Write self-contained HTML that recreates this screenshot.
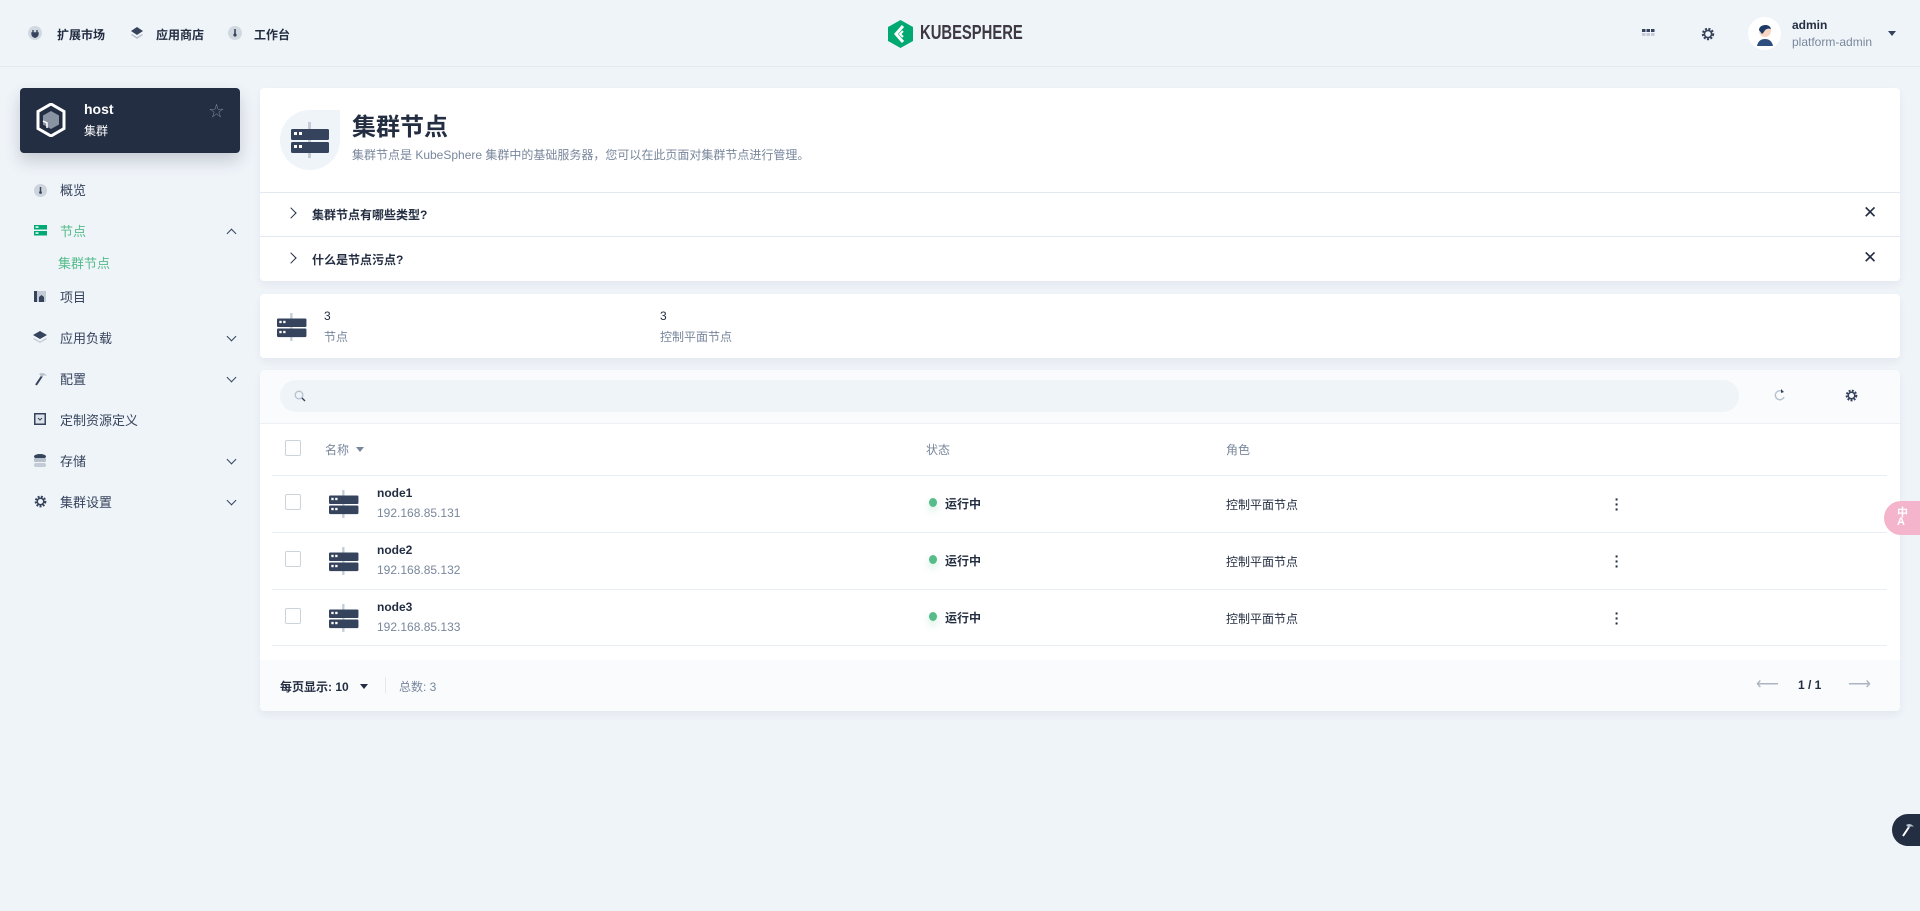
<!DOCTYPE html>
<html><head><meta charset="utf-8"><style>
*{box-sizing:border-box;margin:0;padding:0}
body{width:1920px;height:911px;background:#eff4f9;font-family:"Liberation Sans","Noto Sans CJK SC",sans-serif;color:#242e42;position:relative;overflow:hidden;font-size:12px}
.a{position:absolute}
.b{font-weight:bold}
.m{color:#79879c}
.card{position:absolute;background:#fff;border-radius:4px;box-shadow:0 4px 8px rgba(36,46,66,.06)}
.nav{position:absolute;left:60px;font-size:13px;color:#36435c}
.chev{position:absolute;left:228px;width:7px;height:7px;border-right:1.6px solid #36435c;border-bottom:1.6px solid #36435c;transform:rotate(45deg)}
.hl{position:absolute;left:272px;width:1615px;height:1px;background:#e9eef4}
.cb{position:absolute;left:285px;width:16px;height:16px;border:1px solid #ccd3db;border-radius:2px;background:#fff}
</style></head><body>
<!-- top bar -->
<div class="a" style="left:0;top:66px;width:1920px;height:1px;background:#e3e9ef"></div>
<svg class="a" style="left:28px;top:26px" width="14" height="14"><circle cx="7" cy="7" r="7" fill="#d1d8e0"/><path d="M5 4v3M9 4v3M4 7h6v1a3 3 0 0 1-6 0z M7 10v2" stroke="#36435c" stroke-width="1.4" fill="#36435c"/></svg>
<div class="a b" style="left:57px;top:26px;font-size:12px">扩展市场</div>
<svg class="a" style="left:130px;top:26px" width="14" height="14"><path d="M7 1 13 5 7 9 1 5z" fill="#36435c"/><path d="M2 8 7 11 12 8 13 9 7 13 1 9z" fill="#b7c1cc"/></svg>
<div class="a b" style="left:156px;top:26px;font-size:12px">应用商店</div>
<svg class="a" style="left:228px;top:26px" width="14" height="14"><circle cx="7" cy="7" r="7" fill="#d1d8e0"/><path d="M7 3v6" stroke="#36435c" stroke-width="1.6"/><circle cx="7" cy="9" r="1.6" fill="#36435c"/></svg>
<div class="a b" style="left:254px;top:26px;font-size:12px">工作台</div>
<svg class="a" style="left:888px;top:20px" width="25" height="28" viewBox="0 0 25 28"><path d="M12.5 0 25 7v14L12.5 28 0 21V7z" fill="#00a971"/><path d="M15 6 8 14l7 8" stroke="#fff" stroke-width="3" fill="none"/><path d="M15 11l-3 3 3 3" stroke="#fff" stroke-width="2" fill="none"/></svg>
<div class="a" style="left:920px;top:22px;font-size:20px;color:#3d3842;font-weight:bold;transform:scaleX(0.74);transform-origin:left">KUBESPHERE</div>
<svg class="a" style="left:1642px;top:29px" width="13" height="10"><g fill="#36435c"><rect x="0" y="0" width="3.5" height="3"/><rect x="4.5" y="0" width="3.5" height="3"/><rect x="9" y="0" width="3.5" height="3"/></g><g fill="#c3ccd6"><rect x="0" y="4" width="3.5" height="3"/><rect x="4.5" y="4" width="3.5" height="3"/><rect x="9" y="4" width="3.5" height="3"/></g></svg>
<svg class="a" style="left:1701px;top:27px" width="14" height="14" viewBox="0 0 14 14"><circle cx="7" cy="7" r="5" fill="none" stroke="#36435c" stroke-width="2.4" stroke-dasharray="2 1.4"/><circle cx="7" cy="7" r="3.6" fill="none" stroke="#36435c" stroke-width="1.6"/></svg>
<div class="a" style="left:1748px;top:17px;width:33px;height:33px;border-radius:50%;background:#fff"></div>
<svg class="a" style="left:1754px;top:21px" width="22" height="25"><circle cx="11" cy="10" r="6" fill="#f6d6c3"/><path d="M5 9c0-6 11-7 12-1-3-1-6 0-7 3l-2 2z" fill="#1e3a66"/><path d="M3 25c1-5 4-7 8-7s7 2 8 7z" fill="#2d4e7e"/></svg>
<div class="a b" style="left:1792px;top:18px;font-size:12px">admin</div>
<div class="a m" style="left:1792px;top:35px;font-size:12px">platform-admin</div>
<div class="a" style="left:1888px;top:31px;border:4.5px solid transparent;border-top:5px solid #36435c"></div>

<!-- sidebar card -->
<div class="a" style="left:20px;top:88px;width:220px;height:65px;background:#242e42;border-radius:4px;box-shadow:0 8px 16px rgba(36,46,66,.2)"></div>
<svg class="a" style="left:36px;top:103px" width="30" height="34" viewBox="0 0 30 34"><path d="M15 1 28 8.5v17L15 33 2 25.5v-17z" fill="none" stroke="#fff" stroke-width="3"/><path d="M15 8 23 12.5v9L15 26 7 21.5v-9z" fill="#8a93a2"/><path d="M7 18 11 20v5" stroke="#fff" stroke-width="1.5" fill="none"/></svg>
<div class="a b" style="left:84px;top:101px;font-size:14px;color:#fff">host</div>
<div class="a" style="left:84px;top:122px;font-size:12px;color:#fff">集群</div>
<div class="a" style="left:209px;top:100px;font-size:15px;color:#79879c">☆</div>

<!-- nav -->
<svg class="a" style="left:34px;top:184px" width="13" height="13"><circle cx="6.5" cy="6.5" r="6.5" fill="#cdd4dc"/><path d="M6.5 3v5" stroke="#36435c" stroke-width="1.5"/><circle cx="6.5" cy="8.5" r="1.4" fill="#36435c"/></svg>
<div class="nav" style="top:180px">概览</div>
<svg class="a" style="left:34px;top:225px" width="13" height="11"><rect width="13" height="4.5" fill="#00aa72"/><rect y="6" width="13" height="4.5" fill="#00aa72"/><rect x="1.5" y="1.3" width="3" height="1.5" fill="#fff"/><rect x="1.5" y="7.3" width="3" height="1.5" fill="#fff"/></svg>
<div class="nav" style="top:221px;color:#55bc8a">节点</div>
<div class="chev" style="top:230px;transform:rotate(225deg)"></div>
<div class="nav" style="left:58px;top:253px;color:#55bc8a">集群节点</div>
<svg class="a" style="left:34px;top:291px" width="12" height="11"><rect width="12" height="11" fill="#c3ccd6"/><rect width="3" height="11" fill="#36435c"/><path d="M5 11V6l2.5-2L10 6v5z" fill="#36435c"/></svg>
<div class="nav" style="top:287px">项目</div>
<svg class="a" style="left:33px;top:331px" width="14" height="13"><path d="M7 0 14 4 7 8 0 4z" fill="#36435c"/><path d="M1 7 7 10.5 13 7 14 8 7 12 0 8z" fill="#c3ccd6"/></svg>
<div class="nav" style="top:328px">应用负载</div>
<div class="chev" style="top:333px"></div>
<svg class="a" style="left:34px;top:372px" width="13" height="14"><path d="M2 13 8 4" stroke="#36435c" stroke-width="2"/><path d="M5 2c3-2 6-1 8 2-2-1-4-1-5 1z" fill="#b7c1cc"/></svg>
<div class="nav" style="top:369px">配置</div>
<div class="chev" style="top:374px"></div>
<svg class="a" style="left:34px;top:413px" width="12" height="12"><rect x=".75" y=".75" width="10.5" height="10.5" fill="#dde3ea" stroke="#36435c" stroke-width="1.5"/><path d="M4 5l2 2 2-2" stroke="#36435c" fill="none"/></svg>
<div class="nav" style="top:410px">定制资源定义</div>
<svg class="a" style="left:34px;top:454px" width="12" height="13"><ellipse cx="6" cy="2.5" rx="6" ry="2.5" fill="#36435c"/><rect y="4" width="12" height="4" rx="1" fill="#b7c1cc"/><rect y="9" width="12" height="4" rx="2" fill="#c3ccd6"/></svg>
<div class="nav" style="top:451px">存储</div>
<div class="chev" style="top:456px"></div>
<svg class="a" style="left:34px;top:495px" width="13" height="13" viewBox="0 0 14 14"><circle cx="7" cy="7" r="5" fill="none" stroke="#36435c" stroke-width="2.6" stroke-dasharray="2 1.4"/><circle cx="7" cy="7" r="3.5" fill="none" stroke="#36435c" stroke-width="1.6"/></svg>
<div class="nav" style="top:492px">集群设置</div>
<div class="chev" style="top:497px"></div>

<!-- header card -->
<div class="card" style="left:260px;top:88px;width:1640px;height:193px"></div>
<div class="a" style="left:280px;top:110px;width:60px;height:60px;border-radius:50% 0 50% 50%;background:#eff4f9"></div>
<svg class="a" style="left:291px;top:122px" width="40" height="36" viewBox="0 0 40 36"><rect x="17" y="0" width="3" height="36" fill="#c3ccd6"/><rect x="0" y="7" width="38" height="11" rx="1.5" fill="#36435c"/><rect x="0" y="20" width="38" height="11" rx="1.5" fill="#36435c"/><rect x="3" y="10" width="3" height="3" fill="#fff"/><rect x="8" y="10" width="3" height="3" fill="#fff"/><rect x="3" y="23" width="3" height="3" fill="#fff"/><rect x="8" y="23" width="3" height="3" fill="#fff"/></svg>
<div class="a b" style="left:352px;top:107px;font-size:24px">集群节点</div>
<div class="a m" style="left:352px;top:146px;font-size:12px">集群节点是 KubeSphere 集群中的基础服务器，您可以在此页面对集群节点进行管理。</div>
<div class="a" style="left:260px;top:192px;width:1640px;height:1px;background:#e3e9ef"></div>
<div class="a" style="left:260px;top:236px;width:1640px;height:1px;background:#e3e9ef"></div>
<div class="a" style="left:287px;top:209px;width:8px;height:8px;border-right:1.8px solid #242e42;border-top:1.8px solid #242e42;transform:rotate(45deg)"></div>
<div class="a b" style="left:312px;top:206px;font-size:12px">集群节点有哪些类型?</div>
<div class="a" style="left:1863px;top:203px;font-size:17px;color:#242e42">✕</div>
<div class="a" style="left:287px;top:254px;width:8px;height:8px;border-right:1.8px solid #242e42;border-top:1.8px solid #242e42;transform:rotate(45deg)"></div>
<div class="a b" style="left:312px;top:251px;font-size:12px">什么是节点污点?</div>
<div class="a" style="left:1863px;top:248px;font-size:17px;color:#242e42">✕</div>

<!-- stats -->
<div class="card" style="left:260px;top:294px;width:1640px;height:64px"></div>
<svg class="a" style="left:277px;top:312px" width="31" height="30" viewBox="0 0 40 36"><rect x="17" y="0" width="3" height="36" fill="#c3ccd6"/><rect x="0" y="7" width="38" height="11" rx="1.5" fill="#36435c"/><rect x="0" y="20" width="38" height="11" rx="1.5" fill="#36435c"/><rect x="3" y="10" width="3" height="3" fill="#fff"/><rect x="8" y="10" width="3" height="3" fill="#fff"/><rect x="3" y="23" width="3" height="3" fill="#fff"/><rect x="8" y="23" width="3" height="3" fill="#fff"/></svg>
<div class="a" style="left:324px;top:309px;font-size:12px">3</div>
<div class="a m" style="left:324px;top:328px;font-size:12px">节点</div>
<div class="a" style="left:660px;top:309px;font-size:12px">3</div>
<div class="a m" style="left:660px;top:328px;font-size:12px">控制平面节点</div>

<!-- table -->
<div class="card" style="left:260px;top:370px;width:1640px;height:341px;overflow:hidden">
 <div class="a" style="left:0;top:0;width:1640px;height:53px;background:#f9fbfd"></div>
 <div class="a" style="left:0;top:290px;width:1640px;height:51px;background:#f9fbfd"></div>
</div>
<div class="a" style="left:280px;top:380px;width:1459px;height:32px;border-radius:16px;background:#eff4f9"></div>
<svg class="a" style="left:294px;top:390px" width="12" height="12"><circle cx="5" cy="5" r="3.8" fill="none" stroke="#b7c1cc" stroke-width="1.3"/><path d="M8 8l3 3" stroke="#36435c" stroke-width="1.4"/></svg>
<svg class="a" style="left:1774px;top:388px" width="12" height="14"><path d="M9 4A4.5 4.5 0 1 0 10 9" fill="none" stroke="#b7c1cc" stroke-width="1.4"/><path d="M7 1l3 3-3 1z" fill="#36435c"/></svg>
<svg class="a" style="left:1845px;top:389px" width="13" height="13" viewBox="0 0 14 14"><circle cx="7" cy="7" r="5" fill="none" stroke="#36435c" stroke-width="2.6" stroke-dasharray="2 1.4"/><circle cx="7" cy="7" r="3.5" fill="none" stroke="#36435c" stroke-width="1.6"/></svg>
<div class="a" style="left:260px;top:423px;width:1640px;height:1px;background:#edf1f6"></div>
<div class="cb" style="top:440px"></div>
<div class="a m" style="left:325px;top:441px;font-size:12px">名称</div>
<div class="a" style="left:356px;top:447px;border:4px solid transparent;border-top:5px solid #79879c"></div>
<div class="a m" style="left:926px;top:441px;font-size:12px">状态</div>
<div class="a m" style="left:1226px;top:441px;font-size:12px">角色</div>
<div class="hl" style="top:475px"></div>
<div class="hl" style="top:532px"></div>
<div class="hl" style="top:589px"></div>
<div class="hl" style="top:645px"></div>

<div class="cb" style="top:494px"></div>
<svg class="a" style="left:329px;top:489px" width="31" height="30" viewBox="0 0 40 36"><rect x="17" y="0" width="3" height="36" fill="#c3ccd6"/><rect x="0" y="7" width="38" height="11" rx="1.5" fill="#36435c"/><rect x="0" y="20" width="38" height="11" rx="1.5" fill="#36435c"/><rect x="3" y="10" width="3" height="3" fill="#fff"/><rect x="8" y="10" width="3" height="3" fill="#fff"/><rect x="3" y="23" width="3" height="3" fill="#fff"/><rect x="8" y="23" width="3" height="3" fill="#fff"/></svg>
<div class="a b" style="left:377px;top:486px;font-size:12px">node1</div>
<div class="a m" style="left:377px;top:506px;font-size:12px">192.168.85.131</div>
<div class="a" style="left:929px;top:498px;width:8px;height:9px;border-radius:50%;background:#55bc8a;box-shadow:0 4px 8px rgba(85,188,138,.3)"></div>
<div class="a b" style="left:945px;top:495px;font-size:12px">运行中</div>
<div class="a" style="left:1226px;top:496px;font-size:12px">控制平面节点</div>
<div class="a b" style="left:1614px;top:497px;font-size:14px;line-height:5px;width:6px;text-align:center">·<br>·<br>·</div>

<div class="cb" style="top:551px"></div>
<svg class="a" style="left:329px;top:546px" width="31" height="30" viewBox="0 0 40 36"><rect x="17" y="0" width="3" height="36" fill="#c3ccd6"/><rect x="0" y="7" width="38" height="11" rx="1.5" fill="#36435c"/><rect x="0" y="20" width="38" height="11" rx="1.5" fill="#36435c"/><rect x="3" y="10" width="3" height="3" fill="#fff"/><rect x="8" y="10" width="3" height="3" fill="#fff"/><rect x="3" y="23" width="3" height="3" fill="#fff"/><rect x="8" y="23" width="3" height="3" fill="#fff"/></svg>
<div class="a b" style="left:377px;top:543px;font-size:12px">node2</div>
<div class="a m" style="left:377px;top:563px;font-size:12px">192.168.85.132</div>
<div class="a" style="left:929px;top:555px;width:8px;height:9px;border-radius:50%;background:#55bc8a;box-shadow:0 4px 8px rgba(85,188,138,.3)"></div>
<div class="a b" style="left:945px;top:552px;font-size:12px">运行中</div>
<div class="a" style="left:1226px;top:553px;font-size:12px">控制平面节点</div>
<div class="a b" style="left:1614px;top:554px;font-size:14px;line-height:5px;width:6px;text-align:center">·<br>·<br>·</div>

<div class="cb" style="top:608px"></div>
<svg class="a" style="left:329px;top:603px" width="31" height="30" viewBox="0 0 40 36"><rect x="17" y="0" width="3" height="36" fill="#c3ccd6"/><rect x="0" y="7" width="38" height="11" rx="1.5" fill="#36435c"/><rect x="0" y="20" width="38" height="11" rx="1.5" fill="#36435c"/><rect x="3" y="10" width="3" height="3" fill="#fff"/><rect x="8" y="10" width="3" height="3" fill="#fff"/><rect x="3" y="23" width="3" height="3" fill="#fff"/><rect x="8" y="23" width="3" height="3" fill="#fff"/></svg>
<div class="a b" style="left:377px;top:600px;font-size:12px">node3</div>
<div class="a m" style="left:377px;top:620px;font-size:12px">192.168.85.133</div>
<div class="a" style="left:929px;top:612px;width:8px;height:9px;border-radius:50%;background:#55bc8a;box-shadow:0 4px 8px rgba(85,188,138,.3)"></div>
<div class="a b" style="left:945px;top:609px;font-size:12px">运行中</div>
<div class="a" style="left:1226px;top:610px;font-size:12px">控制平面节点</div>
<div class="a b" style="left:1614px;top:611px;font-size:14px;line-height:5px;width:6px;text-align:center">·<br>·<br>·</div>

<div class="a b" style="left:280px;top:678px;font-size:12px">每页显示: 10</div>
<div class="a" style="left:360px;top:684px;border:4.5px solid transparent;border-top:5px solid #242e42"></div>
<div class="a" style="left:385px;top:677px;width:1px;height:16px;background:#e3e9ef"></div>
<div class="a m" style="left:399px;top:678px;font-size:12px">总数: 3</div>
<div class="a" style="left:1756px;top:674px;font-size:16px;color:#abb4bf">⟵</div>
<div class="a b" style="left:1798px;top:678px;font-size:12px">1 / 1</div>
<div class="a" style="left:1848px;top:674px;font-size:16px;color:#abb4bf">⟶</div>

<!-- floating -->
<div class="a" style="left:1884px;top:501px;width:40px;height:34px;border-radius:17px 0 0 17px;background:#f4b5cc"></div>
<div class="a b" style="left:1897px;top:509px;font-size:11px;color:#fff;line-height:9px">中<br>A</div>
<div class="a" style="left:1892px;top:814px;width:32px;height:32px;border-radius:16px 0 0 16px;background:#242e42"></div>
<svg class="a" style="left:1901px;top:823px" width="13" height="14"><path d="M2 13 8 4" stroke="#fff" stroke-width="2"/><path d="M5 2c3-2 6-1 8 2-2-1-4-1-5 1z" fill="#b7c1cc"/></svg>
</body></html>
